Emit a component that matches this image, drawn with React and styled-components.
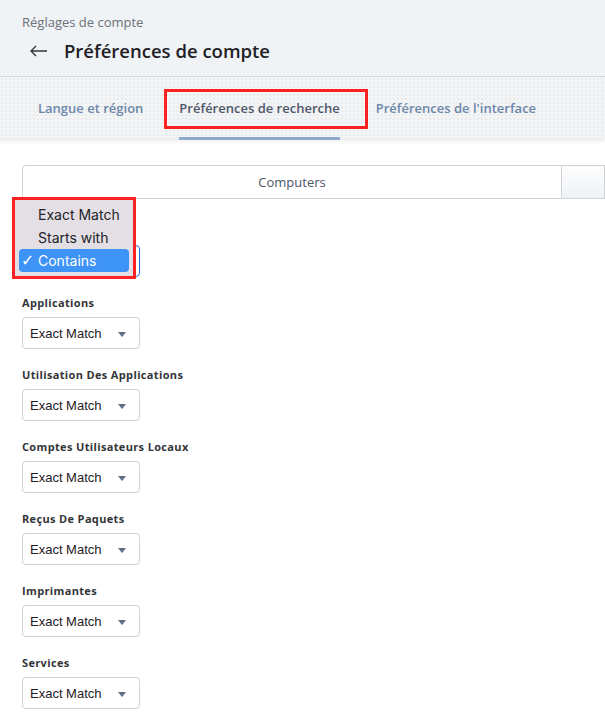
import React from "react";
import styled, { createGlobalStyle } from "styled-components";

const GlobalStyle = createGlobalStyle`
  body {
    margin: 0;
    background: #ffffff;
    font-family: "Open Sans", Lato, sans-serif;
    overflow: hidden;
  }
`;

const SECTIONS = [
  { label: "Computers", value: "Exact Match", open: true },
  { label: "Applications", value: "Exact Match" },
  { label: "Utilisation Des Applications", value: "Exact Match" },
  { label: "Comptes Utilisateurs Locaux", value: "Exact Match" },
  { label: "Reçus De Paquets", value: "Exact Match" },
  { label: "Imprimantes", value: "Exact Match" },
  { label: "Services", value: "Exact Match" },
];

const TABS = [
  { label: "Langue et région" },
  { label: "Préférences de recherche", active: true },
  { label: "Préférences de l'interface" },
];

const OPTIONS = ["Exact Match", "Starts with", "Contains"];

export default function App() {
  return (
    <>
      <GlobalStyle />
      <S.Page>
        <Header.Box>
          <Header.Crumb>Réglages de compte</Header.Crumb>
          <Header.Row>
            <Header.Back>
              <svg width="18" height="12" viewBox="0 0 18 12" fill="none">
                <path d="M1 6h16M6 1L1 6l5 5" stroke="#34373d" strokeWidth="1.4" />
              </svg>
            </Header.Back>
            <Header.Title>Préférences de compte</Header.Title>
          </Header.Row>
        </Header.Box>

        <Tabs.Bar>
          {TABS.map((tab) => (
            <Tabs.Item key={tab.label} $active={tab.active}>
              {tab.label}
              {tab.active && <Tabs.Mark />}
            </Tabs.Item>
          ))}
        </Tabs.Bar>

        <S.Content>
          <Panel.Row>
            <Panel.Tab>Computers</Panel.Tab>
            <Panel.Next />
          </Panel.Row>

          <S.List>
            {SECTIONS.map((section) => (
              <Field.Box key={section.label}>
                <Field.Label>{section.label}</Field.Label>
                <Field.Wrap>
                  <Field.Select $focused={section.open}>
                    {section.value}
                    <Field.Caret />
                  </Field.Select>
                  {section.open && (
                    <Menu.Box>
                      {OPTIONS.map((opt) => (
                        <Menu.Item key={opt} $selected={opt === "Contains"}>
                          <Menu.Check>{opt === "Contains" ? "✓" : ""}</Menu.Check>
                          {opt}
                        </Menu.Item>
                      ))}
                    </Menu.Box>
                  )}
                </Field.Wrap>
              </Field.Box>
            ))}
          </S.List>
        </S.Content>
      </S.Page>
    </>
  );
}

const S = {
  Page: styled.div`
    width: 605px;
    height: 724px;
    overflow: hidden;
  `,
  Content: styled.div`
    padding: 25px 0 0 22px;
  `,
  List: styled.div`
    display: flex;
    flex-direction: column;
    gap: 19px;
    padding-top: 25px;
  `,
};

const Header = {
  Box: styled.div`
    height: 77px;
    box-sizing: border-box;
    padding: 14px 0 0 22px;
    background: #f0f3f6;
    border-bottom: 1px solid #d3d7dc;
  `,
  Crumb: styled.div`
    font-size: 13px;
    color: #6c7077;
    line-height: 16px;
  `,
  Row: styled.div`
    display: flex;
    align-items: center;
    gap: 16px;
    margin-top: 9px;
    padding-left: 8px;
  `,
  Back: styled.span`
    display: flex;
    align-items: center;
  `,
  Title: styled.h1`
    margin: 0;
    font-size: 18.5px;
    font-weight: 600;
    color: #1f2125;
    line-height: 24px;
  `,
};

const Tabs = {
  Bar: styled.div`
    height: 63px;
    box-sizing: border-box;
    display: flex;
    align-items: stretch;
    padding-left: 20px;
    background-color: #f3f4f5;
    background-image: radial-gradient(#e9eaec 1px, transparent 1.2px);
    background-size: 4px 4px;
    box-shadow: 0 2px 4px rgba(0, 0, 0, 0.06);
  `,
  Item: styled.div`
    position: relative;
    display: flex;
    align-items: center;
    padding: 0 18px 1px;
    font-size: 13px;
    font-weight: 600;
    color: ${(p) => (p.$active ? "#4e586b" : "#6b87aa")};
    &::after {
      content: "";
      display: ${(p) => (p.$active ? "block" : "none")};
      position: absolute;
      left: 18px;
      right: 18px;
      bottom: 0;
      height: 3px;
      background: #8eaacb;
    }
  `,
  Mark: styled.span`
    position: absolute;
    left: 3px;
    right: -10px;
    top: 12px;
    bottom: 11px;
    border: 3px solid #fe2121;
  `,
};

const Panel = {
  Row: styled.div`
    display: flex;
    height: 34px;
  `,
  Tab: styled.div`
    width: 540px;
    flex: none;
    box-sizing: border-box;
    display: flex;
    align-items: center;
    justify-content: center;
    border: 1px solid #cfd1d3;
    border-top-left-radius: 4px;
    font-size: 13px;
    color: #4b5566;
  `,
  Next: styled.div`
    flex: 1;
    border: 1px solid #cfd1d3;
    border-left: none;
    background: linear-gradient(#fdfdfe, #eef2f6);
  `,
};

const Field = {
  Box: styled.div`
    display: flex;
    flex-direction: column;
    gap: 7px;
  `,
  Label: styled.div`
    font-size: 11px;
    font-weight: 700;
    line-height: 14px;
    color: #333539;
    letter-spacing: 0.35px;
  `,
  Wrap: styled.div`
    position: relative;
    width: 118px;
  `,
  Select: styled.div`
    height: 32px;
    box-sizing: border-box;
    display: flex;
    align-items: center;
    padding-left: 7px;
    border: ${(p) => (p.$focused ? "1.5px solid #2c6fd9" : "1px solid #cfd2d6")};
    border-radius: 4px;
    font-family: "Liberation Sans", Arial, sans-serif;
    font-size: 13px;
    color: #1f2125;
    background: #fff;
    position: relative;
  `,
  Caret: styled.span`
    position: absolute;
    right: 13px;
    top: 14px;
    width: 0;
    height: 0;
    border-left: 4px solid transparent;
    border-right: 4px solid transparent;
    border-top: 5px solid #5c6c87;
  `,
};

const Menu = {
  Box: styled.div`
    position: absolute;
    left: -10px;
    top: -48px;
    width: 124px;
    box-sizing: border-box;
    padding: 3px 4px 4px;
    background: #e4dfe5;
    border: 3px solid #fe2121;
    display: flex;
    flex-direction: column;
  `,
  Item: styled.div`
    height: 23px;
    display: flex;
    align-items: center;
    border-radius: 4px;
    font-family: Inter, "Liberation Sans", sans-serif;
    font-size: 14px;
    color: ${(p) => (p.$selected ? "#ffffff" : "#222326")};
    background: ${(p) => (p.$selected ? "#3d93f6" : "transparent")};
  `,
  Check: styled.span`
    width: 19px;
    padding-left: 2px;
    box-sizing: border-box;
    font-family: "DejaVu Sans", sans-serif;
    font-size: 16px;
    font-weight: 700;
  `,
};
